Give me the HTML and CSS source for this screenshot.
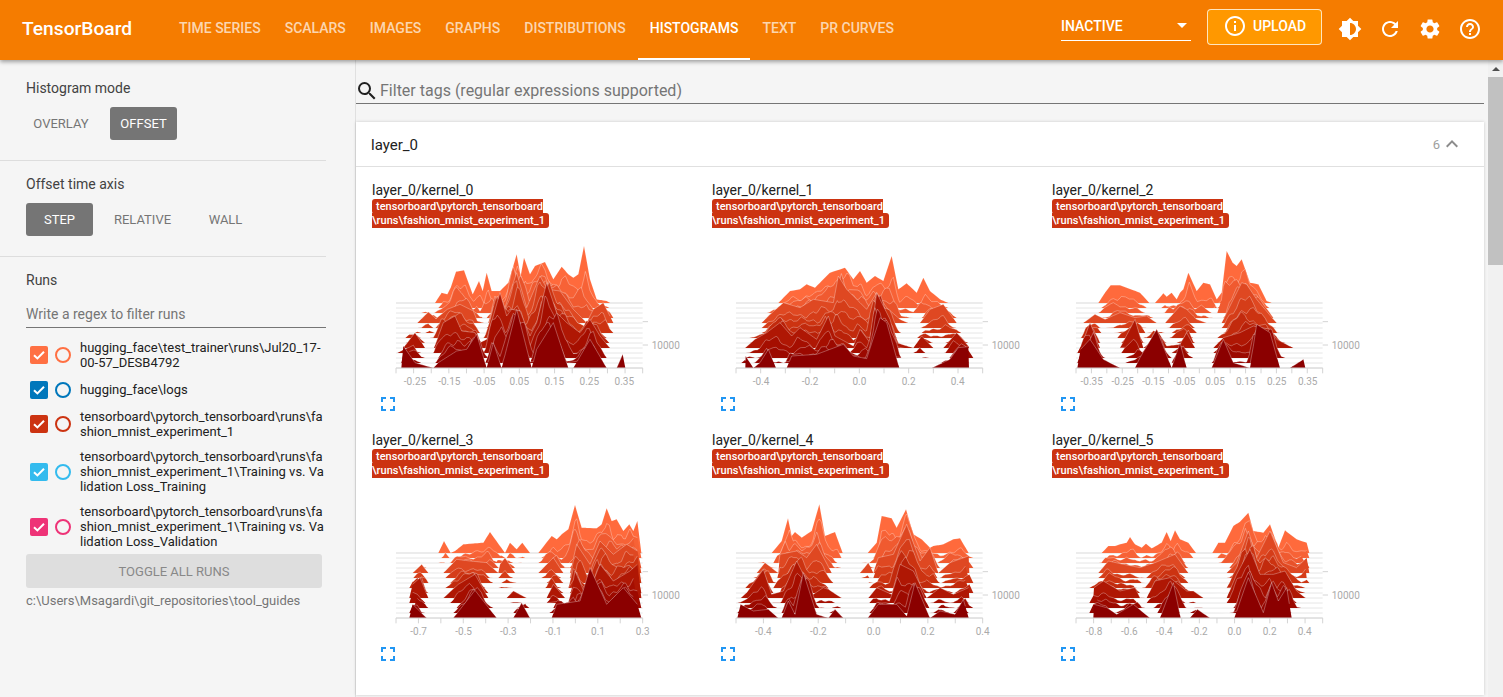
FILE: index.html
```html
<!DOCTYPE html>
<html lang="en">
<head>
<meta charset="utf-8">
<title>TensorBoard</title>
<link rel="stylesheet" href="styles.css">
</head>
<body>
<header class="topbar">
  <div class="logo">TensorBoard</div>
  <nav class="tabs">
    <a class="tab">Time Series</a>
    <a class="tab">Scalars</a>
    <a class="tab">Images</a>
    <a class="tab">Graphs</a>
    <a class="tab">Distributions</a>
    <a class="tab active">Histograms</a>
    <a class="tab">Text</a>
    <a class="tab">PR Curves</a>
  </nav>
  <div class="spacer"></div>
  <div class="select"><span>INACTIVE</span><i class="caret"></i></div>
  <button class="upload">
    <svg class="icon" viewBox="0 0 24 24"><path d="M11 7h2v2h-2zm0 4h2v6h-2zm1-9C6.48 2 2 6.48 2 12s4.48 10 10 10 10-4.48 10-10S17.52 2 12 2zm0 18c-4.41 0-8-3.59-8-8s3.59-8 8-8 8 3.59 8 8-3.59 8-8 8z"/></svg>
    <span>UPLOAD</span>
  </button>
  <div class="actions">
    <svg class="icon" viewBox="0 0 24 24"><path d="M20 15.31L23.31 12 20 8.69V4h-4.69L12 .69 8.69 4H4v4.69L.69 12 4 15.31V20h4.69L12 23.31 15.31 20H20v-4.69zM12 18V6c3.31 0 6 2.69 6 6s-2.69 6-6 6z"/></svg>
    <svg class="icon" viewBox="0 0 24 24"><path d="M17.65 6.35C16.2 4.9 14.21 4 12 4c-4.42 0-7.99 3.58-7.99 8s3.57 8 7.99 8c3.73 0 6.84-2.55 7.73-6h-2.08c-.82 2.33-3.04 4-5.65 4-3.31 0-6-2.69-6-6s2.69-6 6-6c1.66 0 3.14.69 4.22 1.78L13 11h7V4l-2.35 2.35z"/></svg>
    <svg class="icon" viewBox="0 0 24 24"><path d="M19.14 12.94c.04-.3.06-.61.06-.94 0-.32-.02-.64-.07-.94l2.03-1.58a.49.49 0 0 0 .12-.61l-1.92-3.32a.488.488 0 0 0-.59-.22l-2.39.96c-.5-.38-1.03-.7-1.62-.94l-.36-2.54a.484.484 0 0 0-.48-.41h-3.84c-.24 0-.43.17-.47.41l-.36 2.54c-.59.24-1.13.57-1.62.94l-2.39-.96c-.22-.08-.47 0-.59.22L2.74 8.87c-.12.21-.08.47.12.61l2.03 1.58c-.05.3-.09.63-.09.94s.02.64.07.94l-2.03 1.58a.49.49 0 0 0-.12.61l1.92 3.32c.12.22.37.29.59.22l2.39-.96c.5.38 1.03.7 1.62.94l.36 2.54c.05.24.24.41.48.41h3.84c.24 0 .44-.17.47-.41l.36-2.54c.59-.24 1.13-.56 1.62-.94l2.39.96c.22.08.47 0 .59-.22l1.92-3.32c.12-.22.07-.47-.12-.61l-2.01-1.58zM12 15.6c-1.98 0-3.6-1.62-3.6-3.6s1.62-3.6 3.6-3.6 3.6 1.62 3.6 3.6-1.62 3.6-3.6 3.6z"/></svg>
    <svg class="icon" viewBox="0 0 24 24"><path d="M11 18h2v-2h-2v2zm1-16C6.48 2 2 6.48 2 12s4.48 10 10 10 10-4.48 10-10S17.52 2 12 2zm0 18c-4.41 0-8-3.59-8-8s3.59-8 8-8 8 3.59 8 8-3.59 8-8 8zm0-14c-2.21 0-4 1.79-4 4h2c0-1.1.9-2 2-2s2 .9 2 2c0 2-3 1.75-3 5h2c0-2.25 3-2.5 3-5 0-2.21-1.79-4-4-4z"/></svg>
  </div>
</header>

<div class="content">
  <aside class="sidebar">
    <section class="side-section first">
      <div class="side-label">Histogram mode</div>
      <div class="toggle-row">
        <button class="toggle wide">OVERLAY</button>
        <button class="toggle on">OFFSET</button>
      </div>
    </section>
    <section class="side-section">
      <div class="side-label">Offset time axis</div>
      <div class="toggle-row">
        <button class="toggle on">STEP</button>
        <button class="toggle">RELATIVE</button>
        <button class="toggle">WALL</button>
      </div>
    </section>
    <section class="runs">
      <div class="side-label">Runs</div>
      <div class="regex">Write a regex to filter runs</div>
      <ul class="run-list">
        <li class="run c-orange"><span class="check"><svg viewBox="0 0 18 18"><path d="M4 9.2l3.4 3.2L14 5.8"/></svg></span><span class="dot"></span><span class="run-name">hugging_face\test_trainer\runs\Jul20_17-00-57_DESB4792</span></li>
        <li class="run c-blue"><span class="check"><svg viewBox="0 0 18 18"><path d="M4 9.2l3.4 3.2L14 5.8"/></svg></span><span class="dot"></span><span class="run-name">hugging_face\logs</span></li>
        <li class="run c-red"><span class="check"><svg viewBox="0 0 18 18"><path d="M4 9.2l3.4 3.2L14 5.8"/></svg></span><span class="dot"></span><span class="run-name">tensorboard\pytorch_tensorboard\runs\fashion_mnist_experiment_1</span></li>
        <li class="run c-sky"><span class="check"><svg viewBox="0 0 18 18"><path d="M4 9.2l3.4 3.2L14 5.8"/></svg></span><span class="dot"></span><span class="run-name">tensorboard\pytorch_tensorboard\runs\fashion_mnist_experiment_1\Training vs. Validation Loss_Training</span></li>
        <li class="run c-pink"><span class="check"><svg viewBox="0 0 18 18"><path d="M4 9.2l3.4 3.2L14 5.8"/></svg></span><span class="dot"></span><span class="run-name">tensorboard\pytorch_tensorboard\runs\fashion_mnist_experiment_1\Training vs. Validation Loss_Validation</span></li>
      </ul>
      <button class="toggle-all">TOGGLE ALL RUNS</button>
      <div class="logdir">c:\Users\Msagardi\git_repositories\tool_guides</div>
    </section>
  </aside>

  <main class="main">
    <div class="search">
      <svg class="search-icon" viewBox="0 0 24 24"><path d="M15.5 14h-.79l-.28-.27A6.471 6.471 0 0 0 16 9.5 6.5 6.5 0 1 0 9.5 16c1.61 0 3.09-.59 4.23-1.57l.27.28v.79l5 4.99L20.49 19l-4.99-5zm-6 0C7.01 14 5 11.99 5 9.5S7.01 5 9.5 5 14 7.01 14 9.5 11.99 14 9.5 14z"/></svg>
      <span>Filter tags (regular expressions supported)</span>
    </div>
    <div class="pane">
      <div class="pane-head">
        <span class="pane-title">layer_0</span>
        <span class="pane-count">6</span>
        <svg class="chevron" viewBox="0 0 24 24"><path d="M7.41 15.41L12 10.83l4.59 4.58L18 14l-6-6-6 6z"/></svg>
      </div>
      <div class="pane-body">
        <article class="card">
          <div class="card-title">layer_0/kernel_0</div>
          <div class="tagline"><span class="tag">tensorboard\pytorch_tensorboard<br>\runs\fashion_mnist_experiment_1</span></div>
          <svg class="chart" data-chart="0"></svg>
          <svg class="expand" viewBox="0 0 24 24"><path d="M7 14H5v5h5v-2H7v-3zm-2-4h2V7h3V5H5v5zm12 7h-3v2h5v-5h-2v3zM14 5v2h3v3h2V5h-5z"/></svg>
        </article>
        <article class="card">
          <div class="card-title">layer_0/kernel_1</div>
          <div class="tagline"><span class="tag">tensorboard\pytorch_tensorboard<br>\runs\fashion_mnist_experiment_1</span></div>
          <svg class="chart" data-chart="1"></svg>
          <svg class="expand" viewBox="0 0 24 24"><path d="M7 14H5v5h5v-2H7v-3zm-2-4h2V7h3V5H5v5zm12 7h-3v2h5v-5h-2v3zM14 5v2h3v3h2V5h-5z"/></svg>
        </article>
        <article class="card">
          <div class="card-title">layer_0/kernel_2</div>
          <div class="tagline"><span class="tag">tensorboard\pytorch_tensorboard<br>\runs\fashion_mnist_experiment_1</span></div>
          <svg class="chart" data-chart="2"></svg>
          <svg class="expand" viewBox="0 0 24 24"><path d="M7 14H5v5h5v-2H7v-3zm-2-4h2V7h3V5H5v5zm12 7h-3v2h5v-5h-2v3zM14 5v2h3v3h2V5h-5z"/></svg>
        </article>
        <article class="card">
          <div class="card-title">layer_0/kernel_3</div>
          <div class="tagline"><span class="tag">tensorboard\pytorch_tensorboard<br>\runs\fashion_mnist_experiment_1</span></div>
          <svg class="chart" data-chart="3"></svg>
          <svg class="expand" viewBox="0 0 24 24"><path d="M7 14H5v5h5v-2H7v-3zm-2-4h2V7h3V5H5v5zm12 7h-3v2h5v-5h-2v3zM14 5v2h3v3h2V5h-5z"/></svg>
        </article>
        <article class="card">
          <div class="card-title">layer_0/kernel_4</div>
          <div class="tagline"><span class="tag">tensorboard\pytorch_tensorboard<br>\runs\fashion_mnist_experiment_1</span></div>
          <svg class="chart" data-chart="4"></svg>
          <svg class="expand" viewBox="0 0 24 24"><path d="M7 14H5v5h5v-2H7v-3zm-2-4h2V7h3V5H5v5zm12 7h-3v2h5v-5h-2v3zM14 5v2h3v3h2V5h-5z"/></svg>
        </article>
        <article class="card">
          <div class="card-title">layer_0/kernel_5</div>
          <div class="tagline"><span class="tag">tensorboard\pytorch_tensorboard<br>\runs\fashion_mnist_experiment_1</span></div>
          <svg class="chart" data-chart="5"></svg>
          <svg class="expand" viewBox="0 0 24 24"><path d="M7 14H5v5h5v-2H7v-3zm-2-4h2V7h3V5H5v5zm12 7h-3v2h5v-5h-2v3zM14 5v2h3v3h2V5h-5z"/></svg>
        </article>
      </div>
    </div>
  </main>

  <div class="scrollbar">
    <div class="scroll-btn"><i></i></div>
    <div class="scroll-thumb"></div>
  </div>
</div>
<script src="charts.js"></script>
</body>
</html>
```
FILE: styles.css
```css
* { box-sizing: border-box; }
html, body { margin: 0; height: 100%; overflow: hidden; }
body {
  font-family: Roboto, "Liberation Sans", sans-serif;
  font-size: 14px;
  color: #212121;
  background: #f5f5f5;
  display: flex;
  flex-direction: column;
}
button { font-family: inherit; border: 0; background: none; padding: 0; }

.topbar {
  height: 60px;
  flex: none;
  display: flex;
  align-items: center;
  background: #f57c00;
  color: #fff;
  box-shadow: 0 2px 4px rgba(0,0,0,.35);
  position: relative;
  z-index: 2;
}
.logo { font-size: 19.2px; font-weight: 500; padding: 0 0 4px 22px; width: 167px; }
.tabs { display: flex; height: 60px; }
.tab {
  display: flex;
  align-items: center;
  padding: 0 12px 2px;
  font-size: 14px;
  font-weight: 500;
  text-transform: uppercase;
  color: rgba(255,255,255,.7);
  border-bottom: 2px solid transparent;
}
.tab.active { color: #fff; border-bottom-color: #fff; }
.spacer { flex: 1; }
.select {
  width: 130px;
  height: 32px;
  margin-top: -10px;
  display: flex;
  align-items: center;
  justify-content: space-between;
  border-bottom: 1px solid #fff;
  font-weight: 500;
  padding: 2px 4px 0 0;
}
.caret { width: 0; height: 0; border: 5px solid transparent; border-top-color: #fff; border-bottom: 0; }
.upload {
  width: 115px;
  height: 36px;
  margin: -6px 0 0 16px;
  display: flex;
  align-items: center;
  gap: 8px;
  padding: 0 0 2px 17px;
  background: #ff9800;
  border: 1px solid rgba(255,255,255,.75);
  border-radius: 4px;
  color: #fff;
  font-size: 14px;
  font-weight: 500;
}
.icon { width: 24px; height: 24px; fill: #fff; flex: none; }
.upload .icon { margin-left: -2px; margin-right: -2px; }
.actions { display: flex; gap: 16px; margin: -2px 21px 0 16px; }

.content { flex: 1; display: flex; min-height: 0; }

.sidebar { width: 356px; flex: none; padding-left: 26px; border-right: 1px solid #e0e0e0; overflow: hidden; }
.side-section { width: 326px; margin-left: -26px; padding: 15px 0 0 26px; border-bottom: 1px solid #ddd; height: 96px; }
.side-section.first { height: 101px; padding-top: 20px; }
.side-label { font-size: 14px; line-height: 16px; color: #424242; }
.toggle-row { display: flex; margin-top: 11px; }
.toggle {
  width: 67px;
  height: 33px;
  border-radius: 3px;
  font-size: 13px;
  font-weight: 400;
  color: #757575;
  margin-right: 16px;
}
.toggle.wide { width: 70px; margin-right: 14px; }
.toggle.on { background: #757575; color: #fff; }
.toggle-row .toggle:last-child { margin-right: 0; }

.runs { padding-top: 15px; width: 300px; }
.regex {
  margin-top: 17px;
  height: 23px;
  font-size: 14px;
  line-height: 18px;
  color: #757575;
  border-bottom: 1px solid #757575;
}
.run-list { list-style: none; margin: 7px 0 0; padding: 0; }
.run { display: flex; align-items: center; padding: 5px 0 5px 4px; min-height: 29px; }
.check { width: 18px; height: 18px; border-radius: 2px; flex: none; }
.check svg { display: block; width: 18px; height: 18px; fill: none; stroke: #fff; stroke-width: 2; }
.dot { width: 16px; height: 16px; border-radius: 50%; border: 2px solid; margin: 0 9px 0 7px; flex: none; }
.run-name { font-size: 13px; line-height: 15px; width: 246px; flex: none; word-break: break-all; color: #212121; }
.c-orange .check { background: #ff7043; } .c-orange .dot { border-color: #ff7043; }
.c-blue .check { background: #0077bb; } .c-blue .dot { border-color: #0077bb; }
.c-red .check { background: #cc3311; } .c-red .dot { border-color: #cc3311; }
.c-sky .check { background: #33bbee; } .c-sky .dot { border-color: #33bbee; }
.c-pink .check { background: #ee3377; } .c-pink .dot { border-color: #ee3377; }
.toggle-all {
  display: block;
  width: 296px;
  height: 34px;
  background: #dedede;
  border-radius: 3px;
  color: #888;
  font-size: 13px;
}
.logdir { margin-top: 6px; font-size: 13px; line-height: 14px; color: #757575; white-space: nowrap; }

.main { flex: 1; min-width: 0; display: flex; flex-direction: column; margin-right: 4px; }
.search {
  margin-top: 18px;
  height: 26px;
  display: flex;
  align-items: center;
  gap: 2px;
  font-size: 16px;
  color: #757575;
  border-bottom: 1px solid #757575;
  flex: none;
}
.search-icon { width: 24px; height: 24px; fill: #212121; flex: none; margin: 0 -1px; }
.pane { margin-top: 18px; flex: 1; background: #fff; box-shadow: 0 0 3px rgba(0,0,0,.18); display: flex; flex-direction: column; margin-bottom: 2px; min-height: 0; }
.pane-head {
  height: 45px;
  flex: none;
  display: flex;
  align-items: center;
  padding: 0 20px 0 15px;
  border-bottom: 1px solid #e0e0e0;
}
.pane-title { flex: 1; font-size: 15px; padding-top: 1px; }
.pane-count { color: #9e9e9e; font-size: 13px; }
.chevron { width: 24px; height: 24px; fill: #8c8c8c; margin-top: -1px; }
.pane-body {
  display: grid;
  grid-template-columns: repeat(3, 340px);
  grid-auto-rows: 250px;
  padding: 15px 0 0 16px;
  overflow: hidden;
  flex: 1;
}
.card-title { font-size: 14px; line-height: 16px; color: #212121; }
.tagline { font-size: 11px; line-height: 14px; letter-spacing: .03px; margin-top: 2px; height: 29px; }
.tag {
  font-weight: 500;
  background: #cc3311;
  color: #fff;
  padding: 1px 4px;
  border-radius: 3px;
}
.chart { display: block; width: 320px; height: 159px; margin-top: 4px; }
.tick-label { font-size: 30px; fill: #aaa; }
.expand { display: block; width: 24px; height: 24px; fill: #2196f3; margin-left: 4px; }

.scrollbar { width: 15px; flex: none; background: #f1f1f1; }
.scroll-btn { height: 17px; display: flex; align-items: center; justify-content: center; }
.scroll-btn i { width: 0; height: 0; border: 4px solid transparent; border-bottom: 4px solid #505050; border-top: 0; }
.scroll-thumb { height: 188px; background: #c1c1c1; }
```
FILE: charts.js
```js
// Ridge-line histograms. Key layers are given in a 3x chart space: [x, top-y] pairs.
var CHARTS = [
  { dy: 0, ticks: 52.86, labels: [[165,'-0.25'],[268,'-0.15'],[373,'-0.05'],[478,'0.05'],[583,'0.15'],[688,'0.25'],[793,'0.35']], keys: [
    [[225,381],[245,350],[262,355],[272,335],[288,287],[312,283],[338,355],[357,315],[368,345],[380,290],[395,345],[420,345],[445,320],[470,235],[482,300],[492,245],[510,295],[525,270],[555,258],[580,310],[605,272],[625,295],[640,305],[655,295],[672,210],[690,310],[710,370],[740,375],[750,381]],
    [[172,441],[205,408],[228,428],[262,400],[300,385],[340,405],[352,435],[372,441],[385,441],[405,360],[420,400],[435,395],[470,290],[500,395],[540,300],[562,340],[600,345],[640,400],[680,440],[700,400],[730,380],[760,441]],
    [[130,516],[165,470],[195,516],[222,516],[250,440],[285,420],[305,465],[345,470],[360,500],[380,490],[420,350],[440,420],[455,400],[480,405],[510,480],[530,440],[560,320],[590,410],[620,440],[660,470],[690,430],[720,480],[750,516],[785,516]],
    [[130,576],[130,510],[165,560],[220,576],[235,560],[290,525],[320,520],[350,475],[380,576],[400,500],[425,576],[470,400],[515,576],[530,520],[580,440],[625,576],[640,576],[690,490],[740,576],[770,576],[788,535],[788,576]]
  ]},
  { dy: 0, ticks: 74, labels: [[183,'-0.4'],[330,'-0.2'],[478,'0.0'],[626,'0.2'],[773,'0.4']], keys: [
    [[235,381],[270,345],[300,340],[320,325],[345,335],[360,320],[390,290],[435,275],[460,310],[480,285],[500,320],[525,300],[550,315],[575,240],[595,340],[620,322],[650,350],[670,305],[690,345],[720,370],[745,381]],
    [[185,441],[205,420],[250,380],[300,395],[340,370],[400,380],[415,300],[440,340],[500,400],[530,350],[560,395],[600,430],[625,441],[660,441],[690,400],[730,385],[770,441]],
    [[135,516],[165,490],[200,470],[240,440],[275,480],[300,455],[350,490],[385,420],[405,480],[460,510],[480,460],[510,500],[530,350],[570,430],[590,500],[640,516],[665,480],[700,516],[730,516],[770,470],[805,510]],
    [[137,576],[137,540],[160,576],[180,560],[205,520],[228,576],[260,576],[275,540],[350,535],[430,505],[460,540],[500,548],[540,425],[560,440],[598,576],[695,576],[750,550],[775,515],[805,512],[807,576]]
  ]},
  { dy: 0, ticks: 46.25, labels: [[155,'-0.35'],[248,'-0.25'],[340,'-0.15'],[433,'-0.05'],[525,'0.05'],[617,'0.15'],[710,'0.25'],[803,'0.35']], keys: [
    [[175,381],[195,350],[212,328],[240,328],[300,350],[328,381],[345,381],[370,352],[380,362],[395,350],[410,370],[420,350],[430,340],[445,290],[470,345],[490,320],[510,325],[530,370],[545,350],[560,225],[578,260],[590,270],[605,250],[630,320],[655,325],[680,375],[695,381]],
    [[130,441],[165,415],[195,430],[240,410],[285,425],[320,420],[350,441],[375,441],[420,390],[440,400],[470,430],[500,441],[545,441],[575,380],[605,320],[620,325],[650,370],[700,430],[710,441]],
    [[122,516],[150,440],[180,516],[240,516],[285,430],[310,516],[330,500],[350,460],[380,510],[420,505],[440,470],[465,516],[520,516],[550,485],[600,470],[640,450],[690,460],[710,490],[760,516]],
    [[122,576],[122,520],[150,490],[190,550],[240,576],[285,576],[300,545],[350,460],[395,576],[420,500],[440,576],[515,576],[550,490],[580,560],[630,576],[650,445],[690,470],[720,576],[750,576],[790,550],[790,576]]
  ]},
  { dy: 15, ticks: 67.27, labels: [[176,'-0.7'],[311,'-0.5'],[445,'-0.3'],[580,'-0.1'],[714,'0.1'],[848,'0.3']], keys: [
    [[235,366],[252,330],[272,366],[285,360],[310,340],[370,335],[390,303],[420,345],[435,366],[450,335],[470,355],[487,335],[510,366],[535,366],[575,315],[590,325],[605,310],[625,295],[645,222],[665,290],[710,292],[725,280],[740,232],[755,270],[770,265],[790,300],[808,280],[820,300],[832,270],[832,366]],
    [[158,426],[185,400],[205,426],[250,426],[290,385],[330,390],[380,395],[415,426],[420,400],[435,380],[465,426],[535,426],[580,380],[610,426],[630,426],[650,340],[690,400],[720,330],[760,370],[800,340],[832,360],[832,426]],
    [[158,501],[158,460],[180,440],[205,501],[250,501],[295,460],[345,430],[385,501],[440,501],[460,480],[500,501],[560,501],[580,460],[615,501],[630,501],[645,420],[680,500],[720,400],[760,450],[810,420],[832,400],[832,501]],
    [[158,561],[158,520],[200,561],[280,561],[345,478],[410,561],[460,561],[485,515],[510,561],[575,561],[590,520],[660,510],[690,410],[740,520],[790,470],[832,520],[832,561]]
  ]},
  { dy: 15, ticks: 82.22, labels: [[190,'-0.4'],[355,'-0.2'],[521,'0.0'],[683,'0.2'],[848,'0.4']], keys: [
    [[215,366],[245,330],[264,262],[275,315],[285,303],[305,320],[335,300],[358,220],[375,315],[405,303],[428,366],[503,366],[530,335],[545,255],[575,262],[590,290],[618,235],[640,310],[665,325],[690,350],[700,345],[730,340],[760,325],[780,322],[806,366]],
    [[170,426],[195,395],[235,426],[240,370],[290,360],[320,380],[350,340],[395,426],[480,426],[505,395],[520,426],[535,380],[580,370],[620,280],[660,390],[690,350],[715,426],[750,395],[806,375],[806,426]],
    [[122,501],[140,485],[190,415],[215,490],[250,480],[290,390],[340,490],[370,470],[385,475],[425,501],[505,501],[530,470],[575,490],[600,400],[640,420],[680,501],[720,470],[760,490],[806,470],[806,501]],
    [[122,561],[122,520],[160,540],[205,535],[235,561],[245,561],[265,510],[285,550],[310,425],[350,550],[385,561],[405,535],[430,561],[503,561],[535,520],[590,520],[620,555],[645,455],[690,561],[720,540],[765,550],[790,505],[806,561]]
  ]},
  { dy: 15, ticks: 52.86, labels: [[162,'-0.8'],[268,'-0.6'],[373,'-0.4'],[478,'-0.2'],[583,'0.0'],[689,'0.2'],[794,'0.4']], keys: [
    [[185,366],[205,345],[225,345],[240,340],[260,335],[270,318],[285,340],[305,350],[318,338],[335,352],[365,335],[380,303],[392,330],[405,298],[420,325],[445,335],[468,366],[517,366],[535,335],[555,335],[580,285],[600,272],[625,245],[640,300],[670,305],[690,280],[715,350],[735,298],[770,325],[800,335],[800,366]],
    [[175,426],[205,390],[250,400],[300,410],[345,395],[405,370],[445,426],[560,426],[590,395],[625,300],[650,380],[690,300],[730,395],[770,410],[800,380],[800,426]],
    [[162,501],[162,470],[190,450],[240,480],[285,470],[300,500],[320,501],[345,450],[390,440],[440,480],[460,480],[490,501],[560,501],[590,430],[630,355],[660,430],[700,430],[735,420],[770,480],[797,501]],
    [[162,561],[162,520],[200,530],[230,550],[280,520],[330,561],[360,561],[400,455],[422,561],[450,561],[472,535],[510,561],[583,561],[625,440],[670,545],[695,455],[715,510],[740,470],[755,561]]
  ]}
];

var NS = 'http://www.w3.org/2000/svg';
var KEY_LAYERS = [13, 9, 4, 0];
var STEP = 15;
var BASE = 576;

function el(name, attrs, text) {
  var n = document.createElementNS(NS, name);
  for (var k in attrs) n.setAttribute(k, attrs[k]);
  if (text) n.textContent = text;
  return n;
}

function colorAt(i) {
  var stops = [[0, [139, 0, 0]], [3, [165, 14, 0]], [7, [204, 51, 17]], [10, [232, 82, 42]], [13, [255, 106, 60]]];
  var s = 0;
  while (s < stops.length - 2 && i > stops[s + 1][0]) s++;
  var a = stops[s], b = stops[s + 1];
  var t = (i - a[0]) / (b[0] - a[0]);
  return 'rgb(' + [0, 1, 2].map(function (c) {
    return Math.round(a[1][c] + (b[1][c] - a[1][c]) * t);
  }).join(',') + ')';
}

function heightAt(points, base, x) {
  if (x < points[0][0] || x > points[points.length - 1][0]) return 0;
  for (var j = 0; j < points.length - 1; j++) {
    var p = points[j], q = points[j + 1];
    if (x >= p[0] && x <= q[0]) {
      var t = q[0] === p[0] ? 1 : (x - p[0]) / (q[0] - p[0]);
      return Math.max(0, base - (p[1] + (q[1] - p[1]) * t));
    }
  }
  return 0;
}

function layerHeight(keys, dy, i, x) {
  var k = 0;
  while (k < 2 && i < KEY_LAYERS[k + 1]) k++;
  var upper = KEY_LAYERS[k], lower = KEY_LAYERS[k + 1];
  if (i === upper) return heightAt(keys[k], BASE - dy - upper * STEP, x);
  if (i === lower) return heightAt(keys[k + 1], BASE - dy - lower * STEP, x);
  var t = (upper - i) / (upper - lower);
  var sx = x + 8 * Math.sin(i * 2.4);
  var a = heightAt(keys[k], BASE - dy - upper * STEP, sx);
  var b = heightAt(keys[k + 1], BASE - dy - lower * STEP, sx);
  var h = (a + (b - a) * t) * (1 + 0.13 * Math.sin(x * 0.07 + i * 1.7) + 0.09 * Math.sin(x * 0.19 + i * 0.9));
  return Math.max(0, h - 14);
}

function drawChart(svg, chart) {
  svg.setAttribute('viewBox', '36 171 960 477');
  var xs = {};
  for (var gx = 100; gx <= 850; gx += 12) xs[gx] = 1;
  chart.keys.forEach(function (key) {
    key.forEach(function (p) { xs[p[0]] = 1; });
  });
  var grid = Object.keys(xs).map(Number).sort(function (a, b) { return a - b; });

  for (var i = 13; i >= 0; i--) {
    var y0 = BASE - i * STEP;
    svg.appendChild(el('line', { x1: 108, x2: 848, y1: y0, y2: y0, stroke: '#e6e6e6', 'stroke-width': i === 13 ? 4 : 3 }));
    var pts = [], top = [];
    grid.forEach(function (x) {
      var h = layerHeight(chart.keys, chart.dy, i, x);
      pts.push(x + ',' + (y0 - h).toFixed(1));
      if (h > 0.5) top.push(x + ',' + (y0 - h).toFixed(1));
    });
    svg.appendChild(el('polygon', {
      points: '100,' + y0 + ' ' + pts.join(' ') + ' 850,' + y0,
      fill: colorAt(i)
    }));
    svg.appendChild(el('polyline', {
      points: top.join(' '), fill: 'none', stroke: '#fff', 'stroke-opacity': i === 13 ? 0.15 : 0.45, 'stroke-width': 2
    }));
  }

  var axis = '#d4d4d4';
  svg.appendChild(el('line', { x1: 108, x2: 848, y1: BASE, y2: BASE, stroke: axis, 'stroke-width': 3 }));
  for (var tx = 108; tx <= 849; tx += chart.ticks) {
    svg.appendChild(el('line', { x1: tx, x2: tx, y1: BASE, y2: BASE + 16, stroke: axis, 'stroke-width': 3 }));
  }
  chart.labels.forEach(function (l) {
    svg.appendChild(el('text', { x: l[0], y: 627, 'text-anchor': 'middle', 'class': 'tick-label' }, l[1]));
  });
  [437, 507].forEach(function (ty) {
    svg.appendChild(el('line', { x1: 848, x2: 864, y1: ty, y2: ty, stroke: axis, 'stroke-width': 3 }));
  });
  svg.appendChild(el('text', { x: 875, y: 518, 'class': 'tick-label' }, '10000'));
}

document.querySelectorAll('svg.chart').forEach(function (svg) {
  drawChart(svg, CHARTS[Number(svg.getAttribute('data-chart'))]);
});
```
